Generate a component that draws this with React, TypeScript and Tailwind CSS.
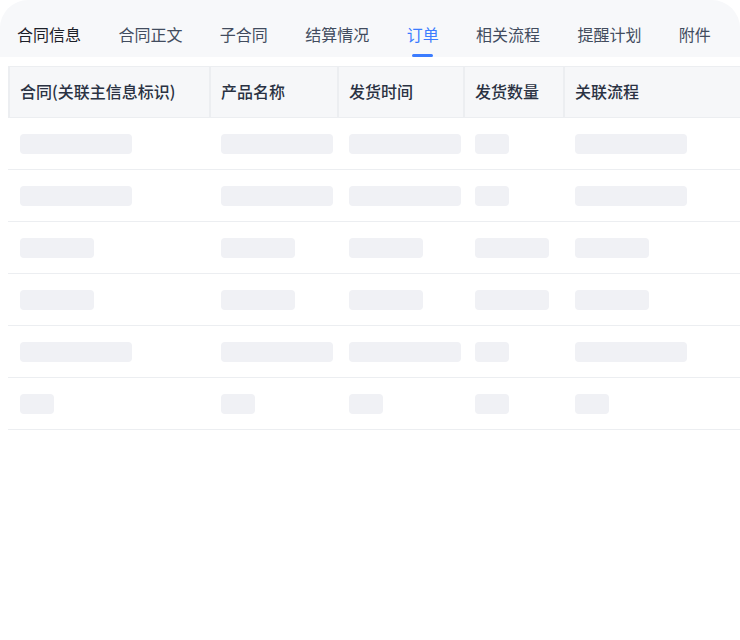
import React from "react";

const tabs = ["合同信息", "合同正文", "子合同", "结算情况", "订单", "相关流程", "提醒计划", "附件"];
const activeTab = "订单";

const columns = ["合同(关联主信息标识)", "产品名称", "发货时间", "发货数量", "关联流程"];

// skeleton widths per row, one per column
const rows: number[][] = [
    [112, 112, 112, 34, 112],
    [112, 112, 112, 34, 112],
    [74, 74, 74, 74, 74],
    [74, 74, 74, 74, 74],
    [112, 112, 112, 34, 112],
    [34, 34, 34, 34, 34],
];

const grid = "grid grid-cols-[201px_128px_126px_100px_1fr]";

export default function App() {
    return (
        <div
            className="w-[740px] h-[640px] bg-white overflow-hidden"
            style={{ fontFamily: '"Noto Sans CJK SC", "Noto Sans", sans-serif' }}
        >
            <div className="h-[57px] rounded-t-[28px] bg-[#f7f8fa] flex pl-[17px] gap-[37.4px] pt-[23px]">
                {tabs.map((tab, i) => {
                    const active = tab === activeTab;
                    return (
                        <div key={tab} className="flex flex-col items-center">
                            <span
                                className={
                                    "text-[16px] leading-[22px] " +
                                    (active ? "text-[#3b7cff]" : i === 0 ? "text-[#1d2129]" : "text-[#424c5e]")
                                }
                            >
                                {tab}
                            </span>
                            {active && <div className="mt-[9px] h-[3px] w-[21px] rounded-full bg-[#3b7cff]" />}
                        </div>
                    );
                })}
            </div>

            <div className="mt-[9px] ml-[8px]">
                <div className={grid + " h-[52px] bg-[#f6f7f9] border-y border-[#eceef1]"}>
                    {columns.map((col) => (
                        <div
                            key={col}
                            className="border-l-2 border-[#eceef1] flex items-center pl-[10px] pb-[3px] text-[16px] font-medium text-[#2a3243] whitespace-nowrap"
                        >
                            {col}
                        </div>
                    ))}
                </div>
                {rows.map((widths, r) => (
                    <div key={r} className={grid + " h-[52px] border-b border-[#eceef1]"}>
                        {widths.map((w, c) => (
                            <div key={c} className="flex items-center pl-[12px]">
                                <div className="h-[20px] rounded-[4px] bg-[#f0f1f5]" style={{ width: w }} />
                            </div>
                        ))}
                    </div>
                ))}
            </div>
        </div>
    );
}
